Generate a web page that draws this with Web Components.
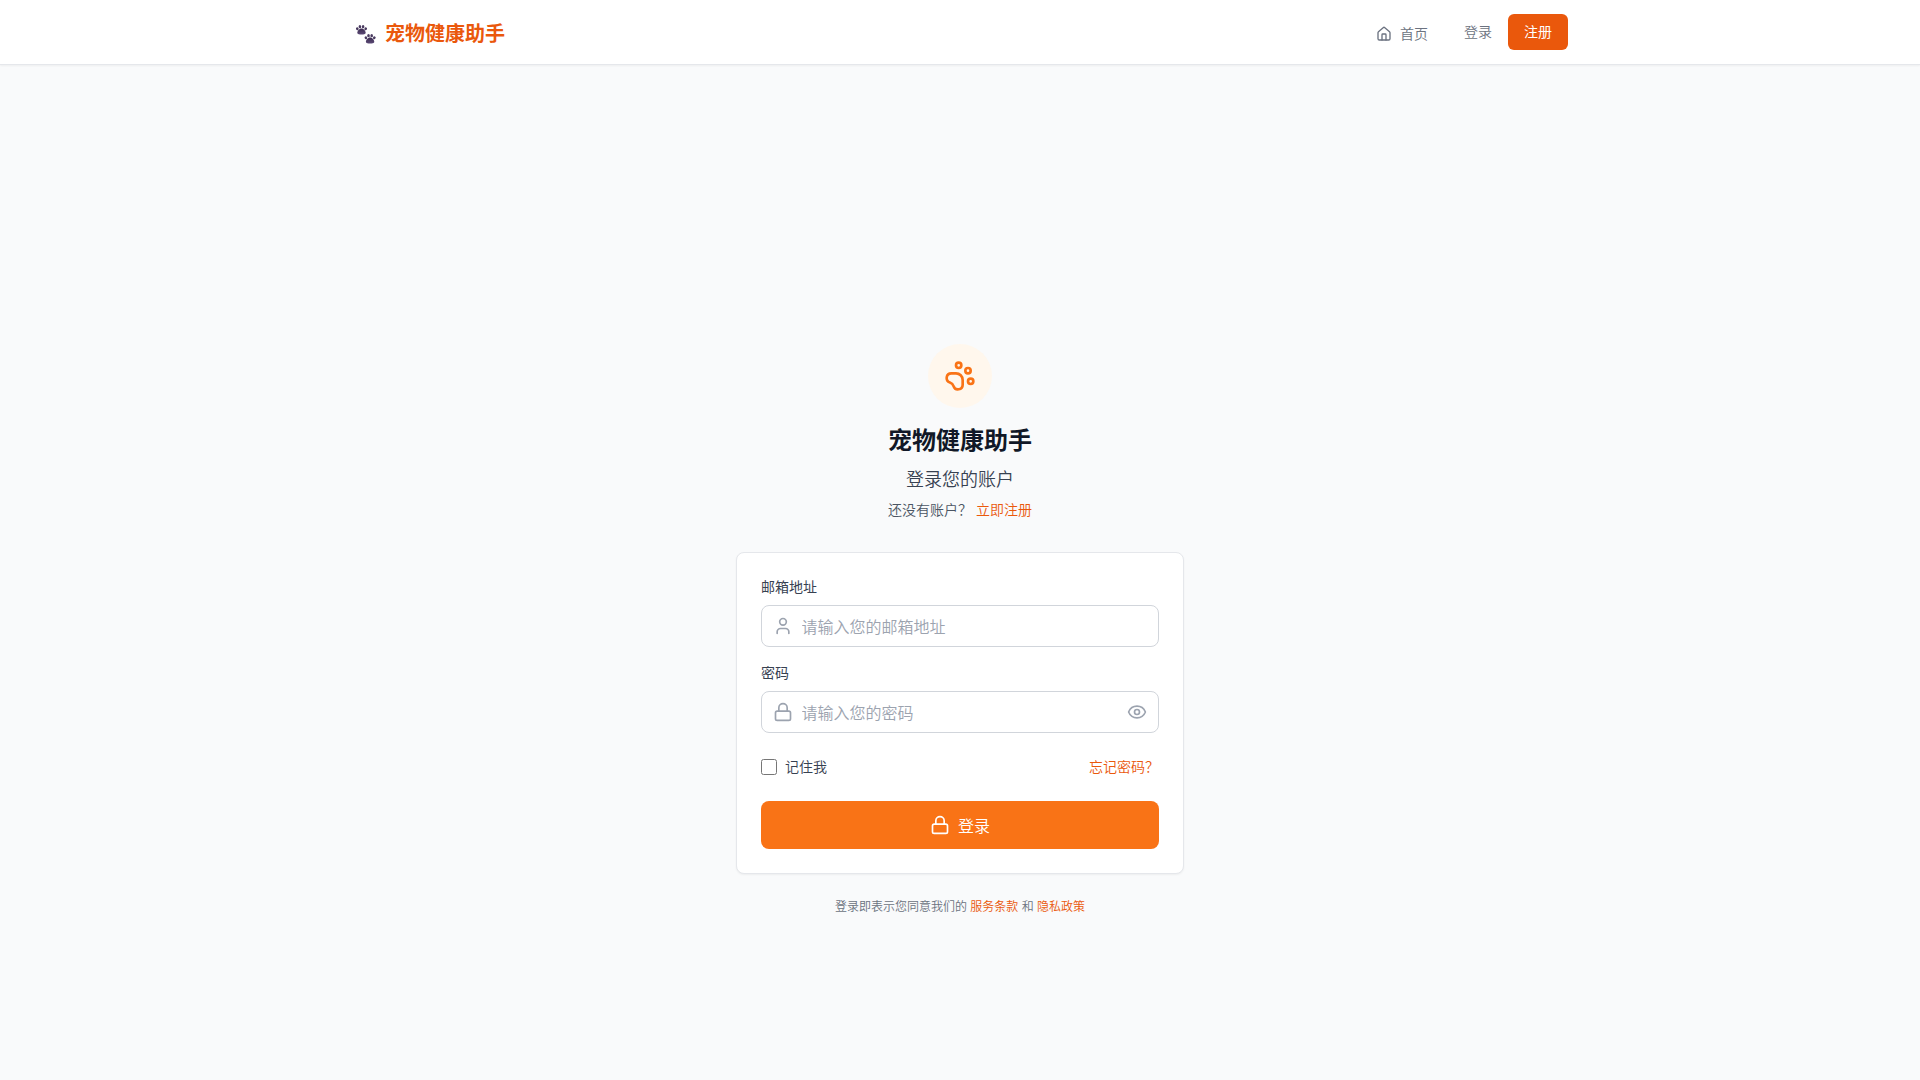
<!DOCTYPE html>
<html lang="zh-CN">
<head>
<meta charset="utf-8">
<title>宠物健康助手</title>
<style>
html,body{margin:0;height:100%}
body{font-family:"Noto Sans CJK SC",sans-serif;font-weight:350;background:#f9fafb;color:#111827;overflow:hidden}
</style>
</head>
<body>
<pet-app></pet-app>
<script>
const ICONS = {
  home: '<path d="M15 21v-8a1 1 0 0 0-1-1h-4a1 1 0 0 0-1 1v8"/><path d="M3 10a2 2 0 0 1 .709-1.528l7-5.999a2 2 0 0 1 2.582 0l7 5.999A2 2 0 0 1 21 10v9a2 2 0 0 1-2 2H5a2 2 0 0 1-2-2z"/>',
  user: '<path d="M19 21v-2a4 4 0 0 0-4-4H9a4 4 0 0 0-4 4v2"/><circle cx="12" cy="7" r="4"/>',
  lock: '<rect x="3" y="11" width="18" height="11" rx="2"/><path d="M7 11V7a5 5 0 0 1 10 0v4"/>',
  eye: '<path d="M2.062 12.348a1 1 0 0 1 0-.696 10.75 10.75 0 0 1 19.876 0 1 1 0 0 1 0 .696 10.75 10.75 0 0 1-19.876 0"/><circle cx="12" cy="12" r="3"/>',
  paw: '<circle cx="11" cy="4" r="2"/><circle cx="18" cy="8" r="2"/><circle cx="20" cy="16" r="2"/><path d="M9 10a5 5 0 0 1 5 5v3.5a3.5 3.5 0 0 1-6.84 1.045Q6.52 17.48 4.46 16.84A3.5 3.5 0 0 1 5.5 10Z"/>'
};
const define = (name, html) => customElements.define(name, class extends HTMLElement {
  constructor() {
    super();
    this.attachShadow({mode: 'open'});
  }
  connectedCallback() {
    if (this.shadowRoot.firstChild) return;
    const t = document.createElement('template');
    t.innerHTML = typeof html === 'function' ? html(this) : html;
    this.shadowRoot.append(t.content.cloneNode(true));
  }
});

define('ui-icon', el => `<style>
:host{display:block;flex:none;width:var(--s,20px);height:var(--s,20px)}
svg{display:block;width:100%;height:100%;fill:none;stroke:currentColor;stroke-width:2;stroke-linecap:round;stroke-linejoin:round}
</style><svg viewBox="0 0 24 24">${ICONS[el.getAttribute('name')]}</svg>`);

define('paw-logo', `<style>
:host{display:block;flex:none;width:20px;height:20px}
svg{display:block}
</style><svg width="20" height="20" viewBox="0 0 20 20">
<defs><linearGradient id="g" x1="0" y1="0" x2="0" y2="1"><stop offset="0" stop-color="#3b2c50"/><stop offset="1" stop-color="#5c4a76"/></linearGradient>
<g id="p"><ellipse cx="1.3" cy="3.8" rx="1.3" ry="1.5" transform="rotate(-25 1.3 3.8)"/><ellipse cx="3.9" cy="1.7" rx="1.3" ry="1.6"/><ellipse cx="7.1" cy="1.7" rx="1.3" ry="1.6"/><ellipse cx="9.7" cy="3.8" rx="1.3" ry="1.5" transform="rotate(25 9.7 3.8)"/><path d="M5.5 3.5C7.9 3.5 9.7 6.2 9.7 7.8C9.7 9.8 7.3 9.4 5.5 9.4S1.3 9.8 1.3 7.8C1.3 6.2 3.1 3.5 5.5 3.5Z" fill="url(#g)"/></g></defs>
<use href="#p" fill="#4a3b60"/><use href="#p" x="8.6" y="9" fill="#4a3b60"/></svg>`);

define('site-header', `<style>
:host{display:block;flex:none;background:#fff;border-bottom:1px solid #e5e7eb;box-shadow:0 1px 2px rgba(0,0,0,.05)}
.in{box-sizing:border-box;width:1280px;height:64px;margin:0 auto;padding:0 32px;display:flex;align-items:center;justify-content:space-between}
.brand{display:flex;align-items:center;gap:9px;padding-left:4px;padding-top:4px;font-size:20px;line-height:28px;font-weight:700;color:#ea580c}
paw-logo{margin-top:1px}
.brand span{margin-top:-2px}
nav{display:flex;align-items:center;font-size:14px;line-height:20px;color:#6b7280}
.home{display:flex;align-items:center;gap:8px;margin-right:36px;padding-top:4px;--s:16px}
.home span{margin:-2px 0 0}
.in2{padding-bottom:2px}
.reg{background:#ea580c;color:#fff;border-radius:6px;padding:7px 16px 9px;margin-left:16px;font-weight:400}
</style><div class="in"><div class="brand"><paw-logo></paw-logo><span>宠物健康助手</span></div>
<nav><a class="home"><ui-icon name="home"></ui-icon><span>首页</span></a><a class="in2">登录</a><a class="reg">注册</a></nav></div>`);

define('page-intro', `<style>
:host{display:flex;flex-direction:column;align-items:center}
.c{width:64px;height:64px;border-radius:50%;background:#fff7ed;color:#f97316;display:flex;align-items:center;justify-content:center;--s:32px}
h1{margin:15px 0 0;font-size:24px;line-height:32px;font-weight:700}
h2{margin:9px 0 0;font-size:18px;line-height:28px;font-weight:350;color:#374151}
p{margin:7px 0 1px;font-size:14px;line-height:20px;color:#4b5563;display:flex;gap:4px}
a{color:#ea580c}
</style><div class="c"><ui-icon name="paw"></ui-icon></div><h1>宠物健康助手</h1><h2>登录您的账户</h2><p><span>还没有账户？</span><a>立即注册</a></p>`);

define('form-field', el => `<style>
:host{display:block}
label{display:block;font-size:14px;line-height:20px;font-weight:400;color:#374151;margin:-1px 0 9px}
.box{box-sizing:border-box;height:42px;display:flex;align-items:center;gap:8.5px;border:1px solid #d1d5db;border-radius:8px;padding:0 11px;background:#fff;color:#9ca3af}
input{flex:1;min-width:0;border:0;outline:0;padding:0 0 1px;margin:0;background:none;font:350 16px/24px "Noto Sans CJK SC",sans-serif;color:#111827}
input::placeholder{color:#9ca3af;opacity:1}
</style><label>${el.getAttribute('label')}</label><div class="box"><ui-icon name="${el.getAttribute('icon')}"></ui-icon><input type="${el.getAttribute('type')}" placeholder="${el.getAttribute('placeholder')}"><slot></slot></div>`);

define('login-card', `<style>
:host{box-sizing:border-box;display:flex;flex-direction:column;width:448px;height:322px;padding:24px;background:#fff;border:1px solid #e5e7eb;border-radius:8px;box-shadow:0 1px 2px rgba(0,0,0,.05)}
form-field+form-field{margin-top:16px}
.row{display:flex;justify-content:space-between;align-items:center;margin-top:24px;height:20px;font-size:14px;line-height:20px;color:#374151}
label{display:flex;align-items:center;gap:8px}
label span,.row a{padding-bottom:2px}
input{margin:0;width:16px;height:16px}
a{color:#ea580c}
button{margin-top:24px;height:48px;border:0;border-radius:8px;background:#f97316;color:#fff;font:350 16px/24px "Noto Sans CJK SC",sans-serif;display:flex;align-items:center;justify-content:center;gap:8px;padding:0}
button span{padding-bottom:1px}
</style><form-field label="邮箱地址" icon="user" type="email" placeholder="请输入您的邮箱地址"></form-field>
<form-field label="密码" icon="lock" type="password" placeholder="请输入您的密码"><ui-icon name="eye"></ui-icon></form-field>
<div class="row"><label><input type="checkbox"><span>记住我</span></label><a>忘记密码？</a></div>
<button type="button"><ui-icon name="lock"></ui-icon><span>登录</span></button>`);

define('legal-note', `<style>
:host{display:flex;gap:3.3px;justify-content:center;font-size:12px;line-height:16px;color:#6b7280}
a{color:#ea580c}
</style><span>登录即表示您同意我们的</span><a>服务条款</a><span>和</span><a>隐私政策</a>`);

define('pet-app', `<style>
:host{display:flex;flex-direction:column;height:100vh}
main{flex:1;display:flex;flex-direction:column;align-items:center;padding-top:279px}
login-card{margin-top:32px}
legal-note{margin-top:24px}
</style><site-header></site-header><main><page-intro></page-intro><login-card></login-card><legal-note></legal-note></main>`);
</script>
</body>
</html>
